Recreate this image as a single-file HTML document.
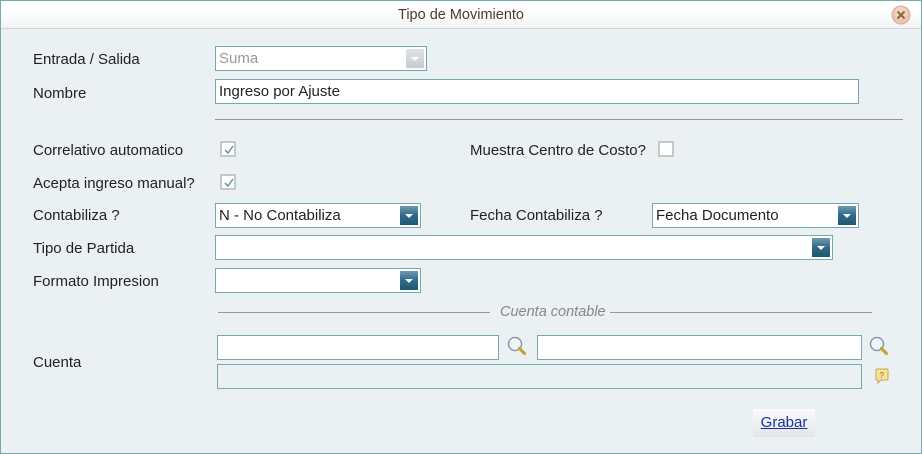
<!DOCTYPE html>
<html><head><meta charset="utf-8"><style>
*{box-sizing:border-box;margin:0;padding:0}
body{width:922px;height:454px;overflow:hidden;background:#fff;font-family:"Liberation Sans",sans-serif;font-size:15px;color:#222}
#w{position:absolute;left:0;top:0;width:922px;height:454px;border:1px solid #78a9ad;background:#ebf0f2}
#t{position:absolute;left:0;top:0;width:920px;height:28px;background:linear-gradient(#fff 0,#fff 40%,#f1f3f3 100%);border-bottom:1px solid #d0d6d8;text-align:center;line-height:28px;color:#4a3b30;font-size:14.5px}
.a{position:absolute;white-space:nowrap}
.l{position:absolute;left:32px;white-space:nowrap}
.i{position:absolute;background:#fff;border:1px solid #77aab0;height:25px;padding-left:3px;line-height:23px;white-space:nowrap}
.b{position:absolute;right:2px;top:2px;width:18px;height:19px;background:linear-gradient(#6e9ab1,#2f6a86 50%,#1f5672)}
.b:after{content:"";position:absolute;left:5px;top:8px;border-left:4px solid transparent;border-right:4px solid transparent;border-top:4px solid #fff}
.c{position:absolute;width:16px;height:16px;border:2px solid #c5c8ca;background:#fff}
.c svg{position:absolute;left:1px;top:1px}
.hr{position:absolute;height:1px;background:#999}
</style></head><body>
<div id="w">
<div id="t">Tipo de Movimiento</div>
<svg class="a" style="left:890px;top:4px" width="20" height="20" viewBox="0 0 20 20"><circle cx="10" cy="10" r="9" fill="#ecc4b3" stroke="#dcae9c"/><circle cx="10" cy="8" r="6" fill="#f6e0d6" opacity=".6"/><path d="M6.5 6.5l7 7M13.5 6.5l-7 7" stroke="#8a6a30" stroke-width="2"/></svg>

<div class="l" style="top:50px">Entrada / Salida</div>
<div class="i" style="left:214px;top:45px;width:212px;color:#999">Suma<div class="b" style="background:linear-gradient(#e0e4e6,#c5cbce)"></div></div>
<div class="l" style="top:84px">Nombre</div>
<div class="i" style="left:214px;top:78px;width:644px">Ingreso por Ajuste</div>
<div class="hr" style="left:214px;top:118px;width:688px"></div>

<div class="l" style="top:141px">Correlativo automatico</div>
<div class="c" style="left:219px;top:140px"><svg width="12" height="12"><path d="M2 6l3 3 5-7" stroke="#5a90ae" stroke-width="1.4" fill="none"/></svg></div>
<div class="a" style="left:469px;top:141px">Muestra Centro de Costo?</div>
<div class="c" style="left:657px;top:140px"></div>
<div class="l" style="top:174px">Acepta ingreso manual?</div>
<div class="c" style="left:219px;top:173px"><svg width="12" height="12"><path d="M2 6l3 3 5-7" stroke="#5a90ae" stroke-width="1.4" fill="none"/></svg></div>

<div class="l" style="top:206px">Contabiliza ?</div>
<div class="i" style="left:214px;top:202px;width:206px">N - No Contabiliza<div class="b"></div></div>
<div class="a" style="left:469px;top:206px">Fecha Contabiliza ?</div>
<div class="i" style="left:651px;top:202px;width:207px">Fecha Documento<div class="b"></div></div>
<div class="l" style="top:239px">Tipo de Partida</div>
<div class="i" style="left:214px;top:234px;width:618px"><div class="b"></div></div>
<div class="l" style="top:272px">Formato Impresion</div>
<div class="i" style="left:214px;top:267px;width:206px"><div class="b"></div></div>

<div class="hr" style="left:217px;top:311px;width:272px"></div>
<div class="a" style="left:499px;top:303px;color:#888;font-style:italic;font-size:14.5px">Cuenta contable</div>
<div class="hr" style="left:609px;top:311px;width:262px"></div>

<div class="l" style="top:353px">Cuenta</div>
<div class="i" style="left:216px;top:334px;width:282px"></div>
<svg class="a" style="left:505px;top:334px" width="22" height="22" viewBox="0 0 22 22"><circle cx="9" cy="9" r="6.5" fill="#eef4fa" stroke="#8a9aa8" stroke-width="1.5"/><path d="M5 7a4 4 0 0 1 4-3" stroke="#fff" stroke-width="1.5" fill="none"/><path d="M13.5 13.5l5 5" stroke="#c9a23a" stroke-width="3.2" stroke-linecap="round"/></svg>
<div class="i" style="left:536px;top:334px;width:325px"></div>
<svg class="a" style="left:867px;top:334px" width="22" height="22" viewBox="0 0 22 22"><circle cx="9" cy="9" r="6.5" fill="#eef4fa" stroke="#8a9aa8" stroke-width="1.5"/><path d="M5 7a4 4 0 0 1 4-3" stroke="#fff" stroke-width="1.5" fill="none"/><path d="M13.5 13.5l5 5" stroke="#c9a23a" stroke-width="3.2" stroke-linecap="round"/></svg>
<div class="i" style="left:216px;top:363px;width:645px;background:#ebf0f2"></div>
<svg class="a" style="left:874px;top:367px" width="14" height="17" viewBox="0 0 14 17"><path d="M2 1h10a1 1 0 0 1 1 1v9a1 1 0 0 1-1 1H6l-3 3v-3H2a1 1 0 0 1-1-1V2a1 1 0 0 1 1-1z" fill="#f4e39a" stroke="#c9a84a"/><text x="4.5" y="10" font-size="8" font-family="Liberation Sans" fill="#8a6a20">?</text></svg>

<div class="a" style="left:752px;top:408px;width:62px;height:28px;background:linear-gradient(#fbfbfb,#e3e5e6);text-align:center;line-height:28px;color:#1c2fa0;text-decoration:underline">Grabar</div>
</div>
</body></html>
